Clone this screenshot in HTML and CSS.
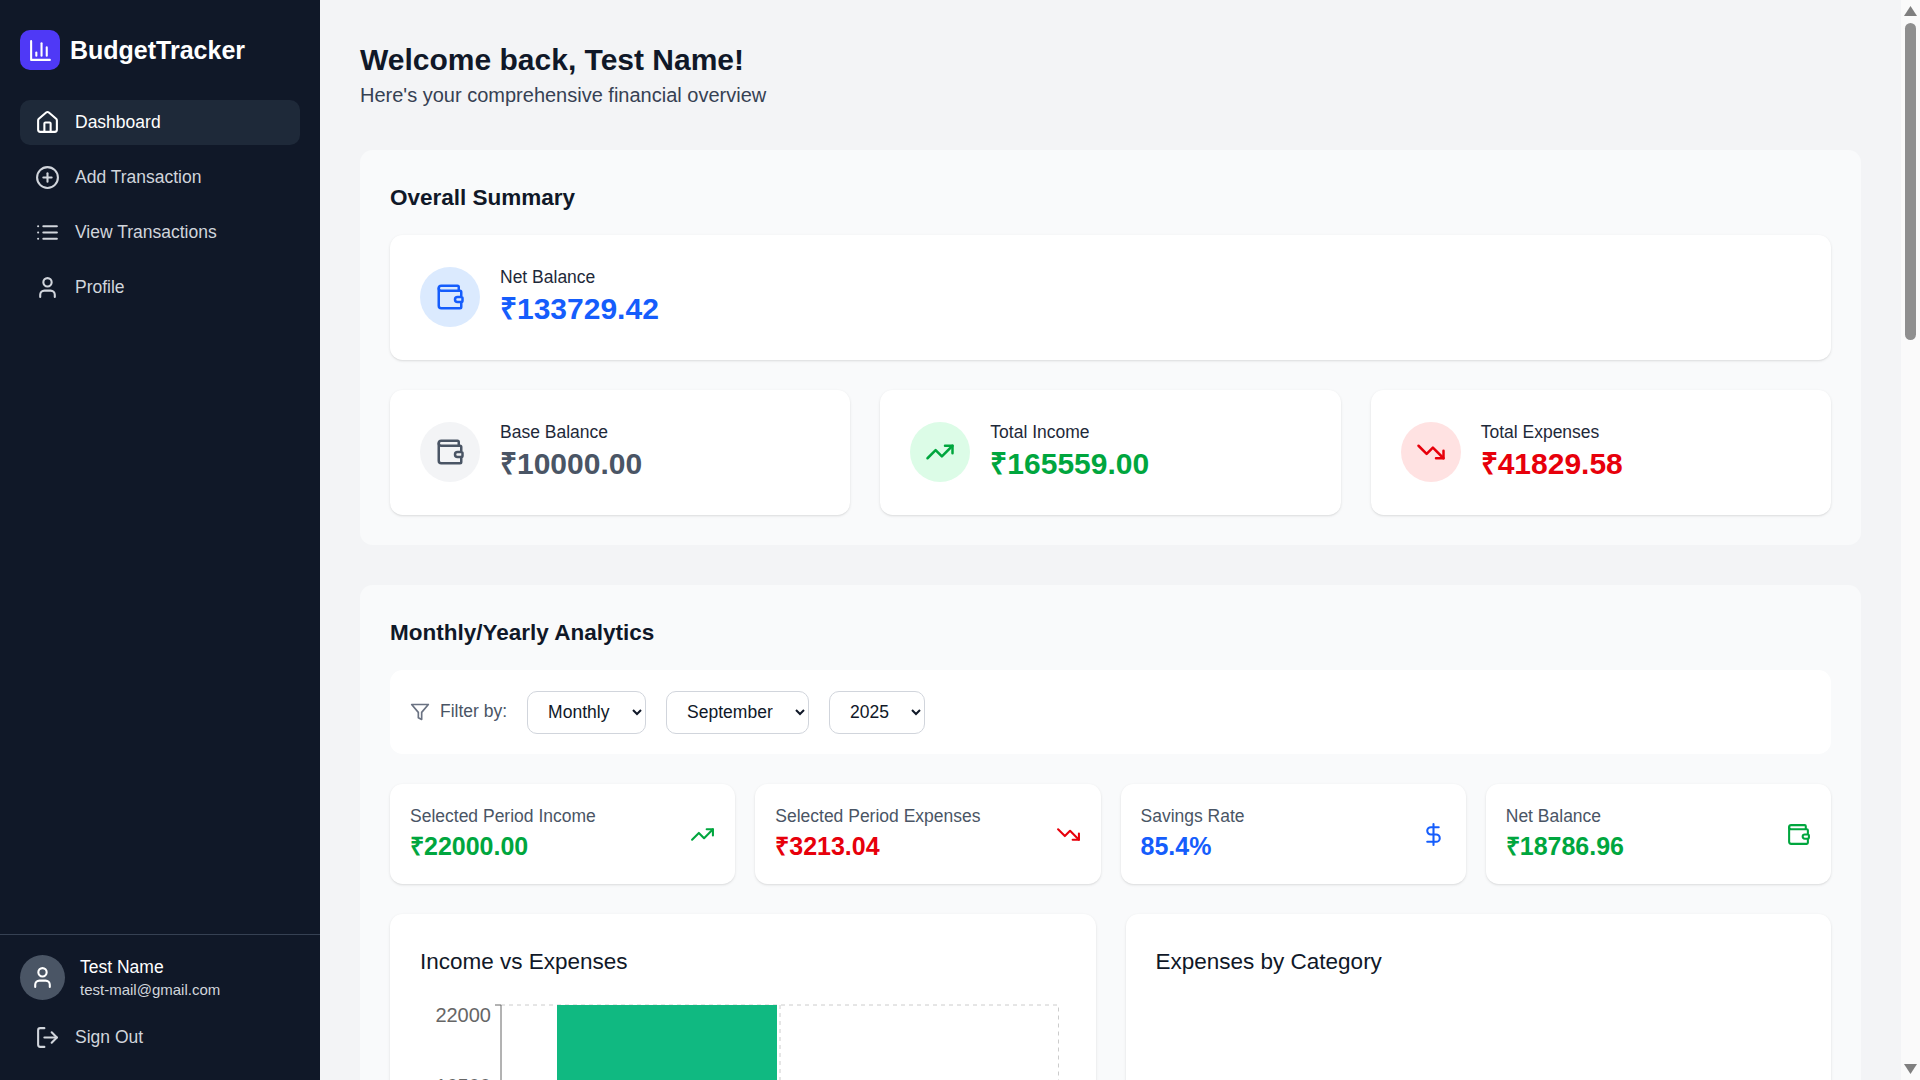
FILE: index.html
```html
<!DOCTYPE html>
<html lang="en">
<head>
  <meta charset="UTF-8" />
  <meta name="viewport" content="width=device-width, initial-scale=1.0" />
  <title>BudgetTracker</title>
  <link rel="stylesheet" href="styles.css">
</head>
<body>
  <svg class="icon-defs" width="0" height="0" aria-hidden="true">
    <symbol id="i-chart" viewBox="0 0 24 24"><path d="M3 3v18h18"/><path d="M18 17V9"/><path d="M13 17V5"/><path d="M8 17v-3"/></symbol>
    <symbol id="i-home" viewBox="0 0 24 24"><path d="M15 21v-8a1 1 0 0 0-1-1h-4a1 1 0 0 0-1 1v8"/><path d="M3 10a2 2 0 0 1 .709-1.528l7-5.999a2 2 0 0 1 2.582 0l7 5.999A2 2 0 0 1 21 10v9a2 2 0 0 1-2 2H5a2 2 0 0 1-2-2z"/></symbol>
    <symbol id="i-plus" viewBox="0 0 24 24"><circle cx="12" cy="12" r="10"/><path d="M8 12h8"/><path d="M12 8v8"/></symbol>
    <symbol id="i-list" viewBox="0 0 24 24"><path d="M3 12h.01"/><path d="M3 18h.01"/><path d="M3 6h.01"/><path d="M8 12h13"/><path d="M8 18h13"/><path d="M8 6h13"/></symbol>
    <symbol id="i-user" viewBox="0 0 24 24"><path d="M19 21v-2a4 4 0 0 0-4-4H9a4 4 0 0 0-4 4v2"/><circle cx="12" cy="7" r="4"/></symbol>
    <symbol id="i-logout" viewBox="0 0 24 24"><path d="M9 21H5a2 2 0 0 1-2-2V5a2 2 0 0 1 2-2h4"/><path d="m16 17 5-5-5-5"/><path d="M21 12H9"/></symbol>
    <symbol id="i-wallet" viewBox="0 0 24 24"><path d="M19 7V4a1 1 0 0 0-1-1H5a2 2 0 0 0 0 4h15a1 1 0 0 1 1 1v4h-3a2 2 0 0 0 0 4h3a1 1 0 0 0 1-1v-2a1 1 0 0 0-1-1"/><path d="M3 5v14a2 2 0 0 0 2 2h15a1 1 0 0 0 1-1v-4"/></symbol>
    <symbol id="i-up" viewBox="0 0 24 24"><path d="M16 7h6v6"/><path d="m22 7-8.5 8.500-5-5L2 17"/></symbol>
    <symbol id="i-down" viewBox="0 0 24 24"><path d="M16 17h6v-6"/><path d="m22 17-8.500-8.500-5 5L2 7"/></symbol>
    <symbol id="i-dollar" viewBox="0 0 24 24"><line x1="12" x2="12" y1="2" y2="22"/><path d="M17 5H9.500a3.500 3.500 0 0 0 0 7h5a3.500 3.500 0 0 1 0 7H6"/></symbol>
    <symbol id="i-filter" viewBox="0 0 24 24"><polygon points="22 3 2 3 10 12.460 10 19 14 21 14 12.460 22 3"/></symbol>
  </svg>

  <div class="app">
    <aside class="sidebar">
      <div class="brand">
        <span class="brand-mark"><svg class="icon icon-25"><use href="#i-chart"/></svg></span>
        <span class="brand-name">BudgetTracker</span>
      </div>
      <nav class="nav">
        <a class="nav-item active"><svg class="icon icon-25"><use href="#i-home"/></svg>Dashboard</a>
        <a class="nav-item"><svg class="icon icon-25"><use href="#i-plus"/></svg>Add Transaction</a>
        <a class="nav-item"><svg class="icon icon-25"><use href="#i-list"/></svg>View Transactions</a>
        <a class="nav-item"><svg class="icon icon-25"><use href="#i-user"/></svg>Profile</a>
      </nav>
      <div class="sidebar-foot">
        <div class="user">
          <span class="avatar"><svg class="icon icon-25"><use href="#i-user"/></svg></span>
          <div>
            <div class="user-name">Test Name</div>
            <div class="user-mail">test-mail@gmail.com</div>
          </div>
        </div>
        <a class="nav-item"><svg class="icon icon-25"><use href="#i-logout"/></svg>Sign Out</a>
      </div>
    </aside>

    <main class="main">
      <header class="page-head">
        <h1>Welcome back, Test Name!</h1>
        <p>Here's your comprehensive financial overview</p>
      </header>

      <section class="panel">
        <h2>Overall Summary</h2>
        <div class="summary-card">
          <span class="round blue-bg"><svg class="icon icon-30 blue"><use href="#i-wallet"/></svg></span>
          <div class="sum-text">
            <div class="sum-label">Net Balance</div>
            <div class="sum-value blue">₹133729.42</div>
          </div>
        </div>
        <div class="summary-row">
          <div class="summary-card">
            <span class="round gray-bg"><svg class="icon icon-30 gray"><use href="#i-wallet"/></svg></span>
            <div class="sum-text">
              <div class="sum-label">Base Balance</div>
              <div class="sum-value gray">₹10000.00</div>
            </div>
          </div>
          <div class="summary-card">
            <span class="round green-bg"><svg class="icon icon-30 green"><use href="#i-up"/></svg></span>
            <div class="sum-text">
              <div class="sum-label">Total Income</div>
              <div class="sum-value green">₹165559.00</div>
            </div>
          </div>
          <div class="summary-card">
            <span class="round red-bg"><svg class="icon icon-30 red"><use href="#i-down"/></svg></span>
            <div class="sum-text">
              <div class="sum-label">Total Expenses</div>
              <div class="sum-value red">₹41829.58</div>
            </div>
          </div>
        </div>
      </section>

      <section class="panel">
        <h2>Monthly/Yearly Analytics</h2>
        <div class="filter-bar">
          <svg class="icon filter-icon"><use href="#i-filter"/></svg>
          <span class="filter-label">Filter by:</span>
          <select><option>Monthly</option></select>
          <select><option>September</option></select>
          <select><option>2025</option></select>
        </div>

        <div class="stat-row">
          <div class="stat-card">
            <div>
              <div class="stat-label">Selected Period Income</div>
              <div class="stat-value green">₹22000.00</div>
            </div>
            <svg class="icon icon-25 green"><use href="#i-up"/></svg>
          </div>
          <div class="stat-card">
            <div>
              <div class="stat-label">Selected Period Expenses</div>
              <div class="stat-value red">₹3213.04</div>
            </div>
            <svg class="icon icon-25 red"><use href="#i-down"/></svg>
          </div>
          <div class="stat-card">
            <div>
              <div class="stat-label">Savings Rate</div>
              <div class="stat-value blue">85.4%</div>
            </div>
            <svg class="icon icon-25 blue"><use href="#i-dollar"/></svg>
          </div>
          <div class="stat-card">
            <div>
              <div class="stat-label">Net Balance</div>
              <div class="stat-value green">₹18786.96</div>
            </div>
            <svg class="icon icon-25 green"><use href="#i-wallet"/></svg>
          </div>
        </div>

        <div class="chart-row">
          <div class="chart-card">
            <h3>Income vs Expenses</h3>
            <svg class="chart" width="645" height="400" viewBox="0 0 645 400">
              <path class="grid-line" d="M81 1H638.500V331M360 1V331M81 331H638.500"/>
              <path class="axis-line" d="M81 1V331M75 1H81M75 83.500H81M75 166H81M75 248.500H81M75 331H81"/>
              <rect x="137" y="1" width="220" height="330" fill="#10b981"/>
              <rect x="362" y="283" width="220" height="48" fill="#ef4444"/>
              <text class="tick" x="71" y="17.500" text-anchor="end">22000</text>
              <text class="tick" x="71" y="89" text-anchor="end">16500</text>
              <text class="tick" x="71" y="173" text-anchor="end">11000</text>
              <text class="tick" x="71" y="255" text-anchor="end">5500</text>
              <text class="tick" x="71" y="338" text-anchor="end">0</text>
            </svg>
          </div>
          <div class="chart-card">
            <h3>Expenses by Category</h3>
          </div>
        </div>
      </section>
    </main>

    <div class="scrollbar" aria-hidden="true">
      <span class="scroll-arrow up"></span>
      <span class="scroll-thumb"></span>
      <span class="scroll-arrow down"></span>
    </div>
  </div>
</body>
</html>
```

FILE: styles.css
```css
* {
  box-sizing: border-box;
}

body {
  margin: 0;
  font-family: "Liberation Sans", Arial, sans-serif;
  color: #101828;
  background: #f3f4f6;
}

h1, h2, h3, p {
  margin: 0;
}

.icon-defs {
  position: absolute;
}

.icon {
  fill: none;
  stroke: currentColor;
  stroke-width: 2;
  stroke-linecap: round;
  stroke-linejoin: round;
  flex-shrink: 0;
}

.icon-25 {
  width: 25px;
  height: 25px;
}

.icon-30 {
  width: 30px;
  height: 30px;
}

.blue { color: #155dfc; }
.green { color: #00a63e; }
.red { color: #e7000b; }
.gray { color: #4a5565; }
.blue-bg { background: #dbeafe; }
.green-bg { background: #dcfce7; }
.red-bg { background: #ffe2e2; }
.gray-bg { background: #f3f4f6; }

.app {
  display: flex;
  height: 100vh;
}

/* sidebar */
.sidebar {
  width: 320px;
  flex-shrink: 0;
  display: flex;
  flex-direction: column;
  background: #101828;
  color: #d1d5dc;
}

.brand {
  display: flex;
  align-items: center;
  gap: 10px;
  padding: 30px 20px;
}

.brand-mark {
  width: 40px;
  height: 40px;
  border-radius: 10px;
  background: #4f39f6;
  color: #fff;
  display: flex;
  align-items: center;
  justify-content: center;
}

.brand-name {
  font-size: 25px;
  font-weight: 700;
  color: #fff;
}

.nav {
  flex: 1;
  display: flex;
  flex-direction: column;
  gap: 10px;
  padding: 0 20px;
}

.nav-item {
  display: flex;
  align-items: center;
  gap: 15px;
  height: 45px;
  padding: 0 15px;
  border-radius: 10px;
  font-size: 17.5px;
}

.nav-item.active {
  background: #1e2939;
  color: #fff;
}

.sidebar-foot {
  border-top: 1px solid #364153;
  padding: 20px;
}

.user {
  display: flex;
  align-items: center;
  gap: 15px;
  margin-bottom: 15px;
}

.avatar {
  width: 45px;
  height: 45px;
  border-radius: 50%;
  background: #4a5565;
  color: #fff;
  display: flex;
  align-items: center;
  justify-content: center;
}

.user-name {
  font-size: 17.5px;
  line-height: 25px;
  color: #fff;
}

.user-mail {
  font-size: 15px;
  line-height: 20px;
}

/* main column */
.main {
  flex: 1;
  min-width: 0;
  overflow: hidden;
  padding: 40px;
}

.page-head {
  margin-bottom: 40px;
}

.page-head h1 {
  font-size: 30px;
  line-height: 40px;
}

.page-head p {
  font-size: 20px;
  line-height: 30px;
  color: #364153;
}

.panel {
  background: #f9fafb;
  border-radius: 12.5px;
  padding: 30px;
  margin-bottom: 40px;
}

.panel h2 {
  font-size: 22.5px;
  line-height: 35px;
  margin-bottom: 20px;
}

.summary-card {
  display: flex;
  align-items: center;
  gap: 20px;
  height: 125px;
  padding: 0 30px;
  background: #fff;
  border-radius: 12.5px;
  box-shadow: 0 1px 3px rgba(0, 0, 0, 0.1), 0 1px 2px -1px rgba(0, 0, 0, 0.1);
}

.summary-row {
  display: grid;
  grid-template-columns: repeat(3, 1fr);
  gap: 30px;
  margin-top: 30px;
}

.round {
  width: 60px;
  height: 60px;
  margin-bottom: 1px;
  border-radius: 50%;
  display: flex;
  align-items: center;
  justify-content: center;
  flex-shrink: 0;
}

.sum-text {
  margin-bottom: 3px;
}

.sum-label {
  font-size: 17.5px;
  line-height: 25px;
  color: #1e2939;
}

.sum-value {
  font-size: 30px;
  line-height: 37px;
  font-weight: 700;
}

.filter-bar {
  display: flex;
  align-items: center;
  height: 84px;
  padding: 0 20px;
  background: #fff;
  border-radius: 12.5px;
}

.filter-icon {
  width: 20px;
  height: 20px;
  color: #6a7282;
}

.filter-label {
  font-size: 17.5px;
  color: #4a5565;
  margin: -1px 20px 0 10px;
}

select {
  height: 43px;
  padding: 0 19px 0 16px;
  margin-right: 20px;
  font-family: inherit;
  font-size: 17.5px;
  color: #101828;
  background: #fff;
  border: 1px solid #d1d5dc;
  border-radius: 10px;
}

.stat-row {
  display: grid;
  grid-template-columns: repeat(4, 1fr);
  gap: 20px;
  margin-top: 30px;
}

.stat-card {
  display: flex;
  align-items: center;
  justify-content: space-between;
  height: 100px;
  padding: 0 20px;
  background: #fff;
  border-radius: 12.5px;
  box-shadow: 0 1px 3px rgba(0, 0, 0, 0.1), 0 1px 2px -1px rgba(0, 0, 0, 0.1);
}

.stat-label {
  font-size: 17.5px;
  line-height: 25px;
  color: #4a5565;
}

.stat-value {
  font-size: 25px;
  line-height: 35px;
  font-weight: 700;
}

.chart-row {
  display: grid;
  grid-template-columns: repeat(2, 1fr);
  gap: 30px;
  margin-top: 30px;
}

.chart-card {
  padding: 30px;
  background: #fff;
  border-radius: 12.5px;
  box-shadow: 0 1px 3px rgba(0, 0, 0, 0.1), 0 1px 2px -1px rgba(0, 0, 0, 0.1);
}

.chart-card h3 {
  font-size: 22.5px;
  line-height: 35px;
  font-weight: 400;
  margin-bottom: 25px;
}

.chart {
  display: block;
}

.grid-line {
  fill: none;
  stroke: #ccc;
  stroke-dasharray: 4 4;
}

.axis-line {
  fill: none;
  stroke: #666;
}

.tick {
  fill: #666;
  font-size: 20px;
}

/* window scrollbar as it stands in the shot */
.scrollbar {
  width: 19px;
  flex-shrink: 0;
  display: flex;
  flex-direction: column;
  align-items: center;
  background: #fafafa;
}

.scroll-arrow {
  width: 13px;
  height: 10px;
  background: #7f7f7f;
}

.scroll-arrow.up {
  margin-top: 6px;
  clip-path: polygon(50% 0, 100% 100%, 0 100%);
}

.scroll-arrow.down {
  margin-top: auto;
  margin-bottom: 6px;
  clip-path: polygon(0 0, 100% 0, 50% 100%);
}

.scroll-thumb {
  width: 11px;
  height: 317px;
  margin-top: 7px;
  border-radius: 6px;
  background: #8f8f8f;
}
```
